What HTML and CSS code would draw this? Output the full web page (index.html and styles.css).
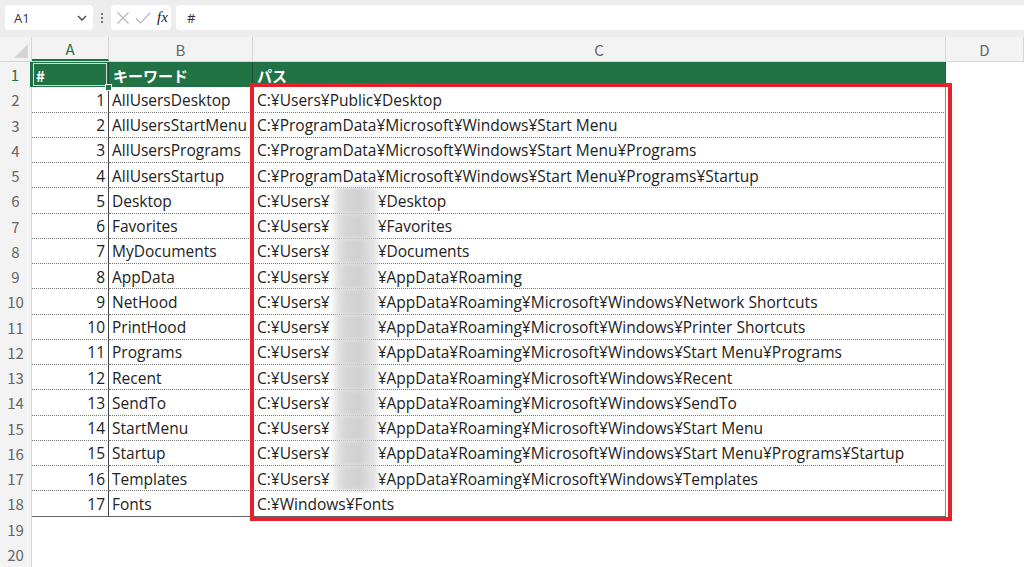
FILE: index.html
```html
<!DOCTYPE html>
<html lang="ja">
<head>
<meta charset="utf-8">
<link rel="stylesheet" href="styles.css">
</head>
<body>
<div class="app">
  <div class="toolbar">
    <div class="namebox"><span>A1</span>
      <svg class="chev" width="10" height="6" viewBox="0 0 10 6"><path d="M1 1 L5 5 L9 1" fill="none" stroke="#444" stroke-width="1.3"/></svg>
    </div>
    <div class="dots"><svg width="4" height="12" viewBox="0 0 4 12"><circle cx="2" cy="2" r="1.1" fill="#555"/><circle cx="2" cy="6" r="1.1" fill="#555"/><circle cx="2" cy="10" r="1.1" fill="#555"/></svg></div>
    <div class="fxbox">
      <svg width="14" height="14" viewBox="0 0 14 14"><path d="M1.5 1.5 L12.5 12.5 M12.5 1.5 L1.5 12.5" stroke="#b9b9b9" stroke-width="1.2" fill="none"/></svg>
      <svg width="16" height="14" viewBox="0 0 16 14"><path d="M1 7.5 L5.5 12 L15 2" stroke="#b9b9b9" stroke-width="1.2" fill="none"/></svg>
      <span class="fx">fx</span>
    </div>
    <div class="formula">#</div>
  </div>

  <div class="sheet">
    <div class="row colhead">
      <div class="corner"><svg width="14" height="14" viewBox="0 0 14 14"><polygon points="14,0 14,14 0,14" fill="#d4d4d4"/></svg></div>
      <div class="ch sel">A</div>
      <div class="ch">B</div>
      <div class="ch">C</div>
      <div class="ch">D</div>
    </div>

    <div class="row">
      <div class="rh sel">1</div>
      <div class="c h a1">#<span class="handle"></span></div>
      <div class="c h">キーワード</div>
      <div class="c h last">パス</div>
      <div class="c e"></div>
    </div>

    <div class="row"><div class="rh">2</div><div class="c n">1</div><div class="c k">AllUsersDesktop</div><div class="c p">C:¥Users¥Public¥Desktop</div><div class="c e"></div></div>
    <div class="row"><div class="rh">3</div><div class="c n">2</div><div class="c k">AllUsersStartMenu</div><div class="c p">C:¥ProgramData¥Microsoft¥Windows¥Start Menu</div><div class="c e"></div></div>
    <div class="row"><div class="rh">4</div><div class="c n">3</div><div class="c k">AllUsersPrograms</div><div class="c p">C:¥ProgramData¥Microsoft¥Windows¥Start Menu¥Programs</div><div class="c e"></div></div>
    <div class="row"><div class="rh">5</div><div class="c n">4</div><div class="c k">AllUsersStartup</div><div class="c p">C:¥ProgramData¥Microsoft¥Windows¥Start Menu¥Programs¥Startup</div><div class="c e"></div></div>
    <div class="row"><div class="rh">6</div><div class="c n">5</div><div class="c k">Desktop</div><div class="c p">C:¥Users¥<span class="blur"></span>¥Desktop</div><div class="c e"></div></div>
    <div class="row"><div class="rh">7</div><div class="c n">6</div><div class="c k">Favorites</div><div class="c p">C:¥Users¥<span class="blur"></span>¥Favorites</div><div class="c e"></div></div>
    <div class="row"><div class="rh">8</div><div class="c n">7</div><div class="c k">MyDocuments</div><div class="c p">C:¥Users¥<span class="blur"></span>¥Documents</div><div class="c e"></div></div>
    <div class="row"><div class="rh">9</div><div class="c n">8</div><div class="c k">AppData</div><div class="c p">C:¥Users¥<span class="blur"></span>¥AppData¥Roaming</div><div class="c e"></div></div>
    <div class="row"><div class="rh">10</div><div class="c n">9</div><div class="c k">NetHood</div><div class="c p">C:¥Users¥<span class="blur"></span>¥AppData¥Roaming¥Microsoft¥Windows¥Network Shortcuts</div><div class="c e"></div></div>
    <div class="row"><div class="rh">11</div><div class="c n">10</div><div class="c k">PrintHood</div><div class="c p">C:¥Users¥<span class="blur"></span>¥AppData¥Roaming¥Microsoft¥Windows¥Printer Shortcuts</div><div class="c e"></div></div>
    <div class="row"><div class="rh">12</div><div class="c n">11</div><div class="c k">Programs</div><div class="c p">C:¥Users¥<span class="blur"></span>¥AppData¥Roaming¥Microsoft¥Windows¥Start Menu¥Programs</div><div class="c e"></div></div>
    <div class="row"><div class="rh">13</div><div class="c n">12</div><div class="c k">Recent</div><div class="c p">C:¥Users¥<span class="blur"></span>¥AppData¥Roaming¥Microsoft¥Windows¥Recent</div><div class="c e"></div></div>
    <div class="row"><div class="rh">14</div><div class="c n">13</div><div class="c k">SendTo</div><div class="c p">C:¥Users¥<span class="blur"></span>¥AppData¥Roaming¥Microsoft¥Windows¥SendTo</div><div class="c e"></div></div>
    <div class="row"><div class="rh">15</div><div class="c n">14</div><div class="c k">StartMenu</div><div class="c p">C:¥Users¥<span class="blur"></span>¥AppData¥Roaming¥Microsoft¥Windows¥Start Menu</div><div class="c e"></div></div>
    <div class="row"><div class="rh">16</div><div class="c n">15</div><div class="c k">Startup</div><div class="c p">C:¥Users¥<span class="blur"></span>¥AppData¥Roaming¥Microsoft¥Windows¥Start Menu¥Programs¥Startup</div><div class="c e"></div></div>
    <div class="row"><div class="rh">17</div><div class="c n">16</div><div class="c k">Templates</div><div class="c p">C:¥Users¥<span class="blur"></span>¥AppData¥Roaming¥Microsoft¥Windows¥Templates</div><div class="c e"></div></div>
    <div class="row lastrow"><div class="rh">18</div><div class="c n">17</div><div class="c k">Fonts</div><div class="c p">C:¥Windows¥Fonts</div><div class="c e"></div></div>
    <div class="row"><div class="rh">19</div><div class="c e"></div><div class="c e"></div><div class="c e"></div><div class="c e"></div></div>
    <div class="row"><div class="rh">20</div><div class="c e"></div><div class="c e"></div><div class="c e"></div><div class="c e"></div></div>
  </div>

  <div class="redbox"></div>
</div>
</body>
</html>
```

FILE: styles.css
```css
* { box-sizing: border-box; }
html, body { margin: 0; padding: 0; background: #fff; }
body {
  font-family: "Open Sans", "Noto Sans CJK JP", sans-serif;
  color: #222;
  overflow: hidden;
}
.app { position: relative; width: 1024px; height: 567px; overflow: hidden; }

.toolbar {
  height: 37px;
  background: #ededed;
  display: flex;
  align-items: flex-start;
  padding: 5px 0 0 5px;
}
.namebox {
  width: 88px; height: 25px;
  background: #fff;
  border-radius: 4px;
  display: flex; align-items: center; justify-content: space-between;
  padding: 0 6px 0 9px;
  font-size: 13px; color: #333;
}
.dots { width: 18px; height: 25px; display: flex; align-items: center; justify-content: center; }
.fxbox {
  width: 60px; height: 25px;
  background: #fff; border-radius: 4px;
  display: flex; align-items: center; gap: 5px;
  padding: 0 0 0 5px;
}
.fx { font-family: "Liberation Serif", "DejaVu Serif", serif; font-style: italic; font-size: 15px; color: #222; margin-left: 1px; }
.formula {
  flex: 1; height: 25px; margin-left: 5px;
  background: #fff; border-radius: 4px 0 0 4px;
  display: flex; align-items: center; padding-left: 11px;
  font-size: 13px; color: #333;
}

.sheet { display: flex; flex-direction: column; }
.row {
  display: grid;
  grid-template-columns: 32px 77px 144px 693px 78px;
  height: 25.25px;
}
.colhead { height: 25px; background: #f3f3f3; border-bottom: 1px solid #d6d6d6; }
.corner { border-right: 1px solid #d6d6d6; display: flex; align-items: flex-end; justify-content: flex-end; padding: 0 3px 3px 0; }
.ch {
  border-right: 1px solid #d6d6d6;
  display: flex; align-items: center; justify-content: center;
  font-family: "Noto Sans CJK JP", sans-serif; font-size: 15px; color: #666;
}
.ch.sel { color: #1e7145; border-bottom: 2px solid #1e7145; }
.rh {
  background: #f3f3f3; border-right: 1px solid #d6d6d6;
  display: flex; align-items: center; justify-content: center;
  font-family: "Noto Sans CJK JP", sans-serif; font-size: 15px; color: #666;
}
.rh.sel { color: #1e7145; border-right: 2px solid #1e7145; }

.c {
  display: flex; align-items: center;
  font-size: 15.5px; white-space: nowrap; padding: 1px 4px 0;
  border-bottom: 1px dotted #777;
}
.c.e { border-bottom: none; }
.c.n { justify-content: flex-end; padding-right: 3px; border-right: 1px solid #444; }
.c.k { border-right: 1px solid #444; padding-left: 3px; }
.c.p { border-right: 1px solid #8a8a8a; }
.c.h {
  background: #217346; color: #fff; font-weight: 700;
  border-bottom: none; border-right: 1px solid #1a4d31;
  font-family: "Noto Sans CJK JP", sans-serif; font-size: 15px;
}
.c.h.last { border-right: 1px solid #2a5a3e; }
.a1 { position: relative; box-shadow: inset 0 0 0 1px #217346, inset 0 0 0 2px #c7e0d1; }
.handle {
  position: absolute; right: -4px; bottom: -4px;
  width: 7px; height: 7px; background: #217346; border: 1px solid #fff; z-index: 2;
}
.lastrow .c.n, .lastrow .c.k, .lastrow .c.p { border-bottom: 1px solid #666; }

.blur {
  display: inline-block;
  width: 45px; align-self: stretch;
  margin: -2px 0 -1px 3px;
  background: linear-gradient(to right, rgba(210,210,210,0.35), #d6d6d6 25%, #d0d0d0 60%, rgba(210,210,210,0.45));
  filter: blur(2px);
}

.redbox {
  position: absolute;
  left: 250px; top: 83px;
  width: 702px; height: 438px;
  border: 4px solid #e8202a;
  pointer-events: none;
}
```
